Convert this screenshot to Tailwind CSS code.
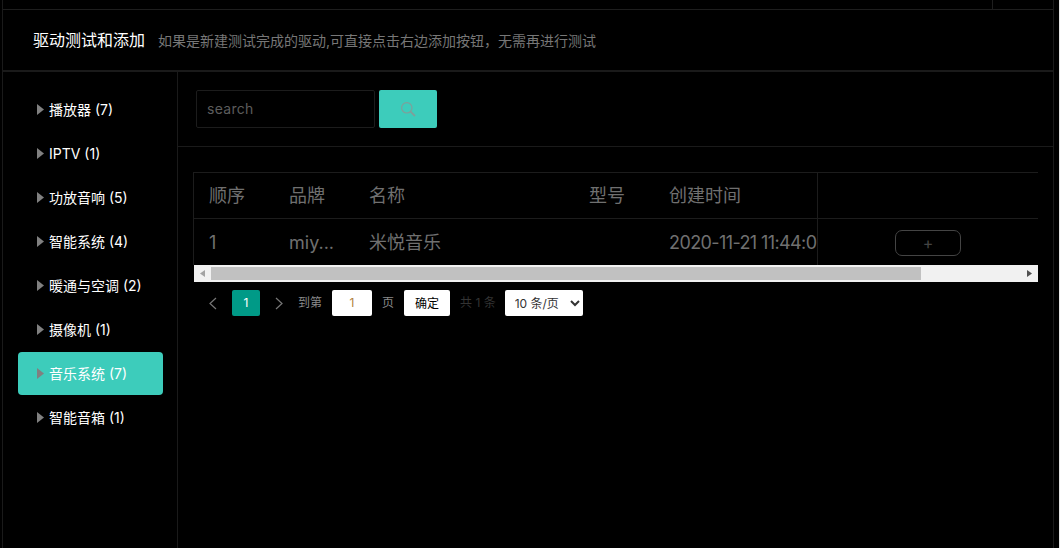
<!DOCTYPE html>
<html lang="zh">
  <head>
    <meta charset="UTF-8" />
    <meta name="viewport" content="width=device-width, initial-scale=1.0" />
    <title>驱动测试和添加</title>
    <script src="https://cdn.jsdelivr.net/npm/@tailwindcss/browser@4"></script>
  </head>
  <body class="bg-black overflow-hidden font-['Inter','Noto_Sans_CJK_SC',sans-serif]">
    <div class="relative h-[548px] w-[1060px] overflow-hidden pl-[2px] pr-[6px]">
      <!-- 外框 -->
      <div class="flex h-full flex-col border-x border-[#1a1a1a]">
        <div class="flex h-[10px] shrink-0 justify-end border-b border-[#1e1e1e]">
          <div class="mr-[60px] h-full w-px bg-[#1e1e1e]"></div>
        </div>

        <!-- 标题 -->
        <div class="flex h-[62px] shrink-0 items-center border-b-2 border-[#1a1a1a] pl-[30px]">
          <h2 class="text-[16px] text-white">驱动测试和添加</h2>
          <p class="ml-[13px] text-[14px] text-[#777777]">如果是新建测试完成的驱动,可直接点击右边添加按钮，无需再进行测试</p>
        </div>

        <div class="flex min-h-0 flex-1">
          <!-- 左侧分类 -->
          <aside class="w-[175px] shrink-0 border-r border-[#1a1a1a] pl-[15px] pr-[14px] pt-[16px]">
            <ul id="categoryList" class="flex flex-col gap-[1px] text-[14px] text-white"></ul>
          </aside>

          <main class="min-w-0 flex-1">
            <!-- 搜索 -->
            <div class="flex h-[75px] items-start gap-[4px] border-b border-[#1a1a1a] pl-[18px] pt-[18px]">
              <input type="text" placeholder="search" class="h-[38px] w-[179px] rounded-[2px] border border-[#1c1c1c] bg-black px-[10px] pb-[2px] text-[14px] tracking-[0.3px] text-[#666666] outline-none placeholder:text-[#5c5c5c]" />
              <button class="flex h-[38px] w-[58px] items-center justify-center rounded-[2px] bg-[#3dccbb]">
                <svg width="16" height="16" viewBox="0 0 16 16" fill="none" stroke="#7f9f9a" stroke-width="1.2">
                  <circle cx="6.8" cy="6.8" r="5.2"></circle>
                  <path d="M10.6 10.6 15 15" stroke-width="1.8"></path>
                </svg>
              </button>
            </div>

            <!-- 表格 -->
            <div class="ml-[15px] mt-[25px] w-[845px]">
              <div class="border-t border-l border-[#1c1c1c] text-[18px] text-[#707070]">
                <div class="grid h-[46px] grid-cols-[80px_80px_220px_80px_163px_1fr] items-center border-b border-[#1c1c1c]">
                  <div class="pl-[15px]">顺序</div>
                  <div class="pl-[15px]">品牌</div>
                  <div class="pl-[15px]">名称</div>
                  <div class="pl-[15px]">型号</div>
                  <div class="pl-[15px]">创建时间</div>
                  <div class="h-full border-l border-[#1c1c1c]"></div>
                </div>
                <div class="grid h-[46px] grid-cols-[80px_80px_220px_80px_163px_1fr] items-center">
                  <div class="pl-[15px]">1</div>
                  <div class="pl-[15px]">miy...</div>
                  <div class="pl-[15px]">米悦音乐</div>
                  <div class="pl-[15px]"></div>
                  <div class="whitespace-nowrap pl-[15px] tracking-[-0.6px]">2020-11-21 11:44:0</div>
                  <div class="flex h-full items-center justify-center border-l border-[#1c1c1c]">
                    <button class="mt-[2px] flex h-[26px] w-[66px] items-center justify-center rounded-[7px] border border-[#444444] text-[16px] leading-none text-[#444444]">+</button>
                  </div>
                </div>
              </div>

              <!-- 横向滚动条 -->
              <div class="ml-px flex h-[17px] w-[844px] items-center bg-[#f1f1f1]">
                <div class="flex w-[17px] shrink-0 justify-center">
                  <svg width="5" height="7" viewBox="0 0 5 7"><path d="M5 0v7L0 3.500z" fill="#a3a3a3"></path></svg>
                </div>
                <div class="h-[13px] w-[710px] bg-[#c1c1c1]"></div>
                <div class="flex flex-1 justify-end pr-[6px]">
                  <svg width="5" height="7" viewBox="0 0 5 7"><path d="M0 0v7l5-3.500z" fill="#505050"></path></svg>
                </div>
              </div>

              <!-- 分页 -->
              <div class="mt-[8px] flex h-[26px] items-center text-[12px] text-[#666666]">
                <svg class="ml-[15px]" width="9" height="13" viewBox="0 0 9 13" fill="none" stroke="#777777" stroke-width="1.200"><path d="M8 1 2 6.500 8 12"></path></svg>
                <div class="ml-[15px] flex h-[26px] w-[28px] items-center justify-center rounded-[2px] bg-[#009a87] text-white">1</div>
                <svg class="ml-[15px]" width="9" height="13" viewBox="0 0 9 13" fill="none" stroke="#777777" stroke-width="1.200"><path d="M1 1l6 5.500L1 12"></path></svg>
                <span class="ml-[14px] text-[#8a8a8a]">到第</span>
                <div class="ml-[10px] flex h-[26px] w-[40px] items-center justify-center rounded-[2px] bg-white text-[#b08040]">1</div>
                <span class="ml-[10px] text-[#8a8a8a]">页</span>
                <button class="ml-[10px] h-[26px] w-[46px] rounded-[2px] bg-white pt-[2px] text-[12px] text-black">确定</button>
                <span class="ml-[10px] text-[#333333]">共 1 条</span>
                <select class="ml-[9px] h-[26px] w-[78px] rounded-[2px] bg-white pl-[6px] text-[12px] text-[#333333] outline-none">
                  <option>10 条/页</option>
                </select>
              </div>
            </div>
          </main>
        </div>
      </div>
      <div class="absolute inset-y-0 right-0 w-px bg-[#e8e8e8]"></div>
    </div>

    <script>
      // 分类数据
      const categories = [
        { name: '播放器', count: 7 },
        { name: 'IPTV', count: 1 },
        { name: '功放音响', count: 5 },
        { name: '智能系统', count: 4 },
        { name: '暖通与空调', count: 2 },
        { name: '摄像机', count: 1 },
        { name: '音乐系统', count: 7, active: true },
        { name: '智能音箱', count: 1 }
      ];

      document.getElementById('categoryList').innerHTML = categories.map(item => `
        <li class="flex h-[43px] items-center rounded-[4px] pl-[19px] ${item.active ? 'bg-[#3dccbb]' : ''}">
          <svg class="mr-[5px] shrink-0" width="7" height="11" viewBox="0 0 7 11"><path d="M0 0l7 5.500L0 11z" fill="#808080"></path></svg>
          <span>${item.name} (${item.count})</span>
        </li>
      `).join('');
    </script>
  </body>
</html>
